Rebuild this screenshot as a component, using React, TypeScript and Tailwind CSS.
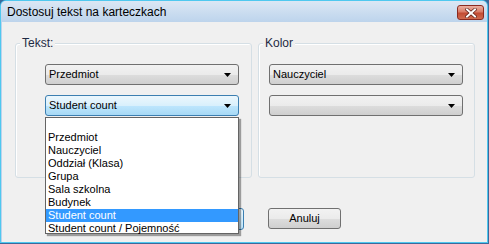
import React from "react";

const font = { fontFamily: '"Liberation Sans", Arial, sans-serif' };

function Arrow() {
  return (
    <svg width="7" height="4" viewBox="0 0 7 4" className="absolute right-[7px] top-1/2 -translate-y-1/2">
      <polygon points="0,0 7,0 3.5,4" fill="#000" />
    </svg>
  );
}

function Combo({ text, focused }: { text: string; focused?: boolean }) {
  return (
    <div
      className={
        "relative h-[21px] w-[194px] rounded-[3px] border flex items-center pl-[3px] text-[11px] text-black " +
        (focused
          ? "border-[#3c7fb1] bg-[linear-gradient(#ecf7fd_0%,#d9f0fc_50%,#bee6fd_51%,#a7d9f5_100%)]"
          : "border-[#707070] bg-[linear-gradient(#f2f2f2_0%,#ebebeb_50%,#dddddd_51%,#cfcfcf_100%)]")
      }
      style={font}
    >
      <span className="leading-none">{text}</span>
      <Arrow />
    </div>
  );
}

function Group({ label, className, children }: { label: string; className: string; children: React.ReactNode }) {
  return (
    <div className={"relative rounded-[3px] border border-[#d5dfe5] shadow-[inset_1px_1px_0_#fff] " + className}>
      <span className="absolute -top-[8px] left-[4px] bg-[#f0f0f0] px-[2px] text-[12px] leading-[14px] text-[#1e2a44]" style={font}>
        {label}
      </span>
      {children}
    </div>
  );
}

export default function App() {
  const items = ["", "Przedmiot", "Nauczyciel", "Oddział (Klasa)", "Grupa", "Sala szkolna", "Budynek", "Student count", "Student count / Pojemność"];
  return (
    <div className="relative w-[489px] h-[244px] bg-[#3a6a9c] overflow-hidden" style={font}>
      <div className="absolute left-0 top-0 w-[488px] h-[243px] bg-[#4fc8ef] rounded-tr-[6px] rounded-tl-[6px]">
        <div className="flex flex-col w-[486px] h-[241px] ml-[1px] mt-[1px] bg-[#bcd3ec] rounded-tr-[5px] rounded-tl-[5px]">
          <div className="h-[21px] flex items-center justify-between bg-[linear-gradient(#dbe7f4,#bdd4ec)] rounded-t-[5px]">
            <span className="pl-[6px] pt-[1px] text-[12px] text-black">Dostosuj tekst na karteczkach</span>
            <div className="mr-[3px] mt-[2px] w-[27px] h-[15px] rounded-[3px] border border-[#8b2a20] bg-[linear-gradient(#eab0a2_0%,#d97c67_45%,#c24b33_55%,#cf6b4f_100%)] flex items-center justify-center">
              <svg width="12" height="10" viewBox="0 0 12 10">
                <path d="M2 1.5 L10 8.5 M10 1.5 L2 8.5" stroke="#5a1a12" strokeWidth="3.4" strokeLinecap="square" />
                <path d="M2 1.5 L10 8.5 M10 1.5 L2 8.5" stroke="#fff" strokeWidth="2" strokeLinecap="square" />
              </svg>
            </div>
          </div>
          <div className="flex-1 bg-[#f0f0f0] ml-[1px] mr-0 relative">
            <div className="flex gap-[6px] pl-[13px] pt-[21px]">
              <Group label="Tekst:" className="w-[237px] h-[135px]">
                <div className="flex flex-col gap-[10px] pl-[29px] pt-[20px]">
                  <Combo text="Przedmiot" />
                  <Combo text="Student count" focused />
                </div>
              </Group>
              <Group label="Kolor" className="w-[217px] h-[135px]">
                <div className="flex flex-col gap-[10px] pl-[10px] pt-[20px]">
                  <Combo text="Nauczyciel" />
                  <Combo text="" />
                </div>
              </Group>
            </div>
            <div className="flex gap-[24px] pl-[167px] pt-[30px]">
              <div className="w-[75px] h-[22px] rounded-[3px] border border-[#3c7fb1] bg-[linear-gradient(#ecf7fd,#bee6fd)]" />
              <div className="w-[73px] h-[21px] rounded-[3px] border border-[#707070] bg-[linear-gradient(#f2f2f2_0%,#ebebeb_50%,#dddddd_51%,#cfcfcf_100%)] flex items-center justify-center text-[11px] text-black">
                Anuluj
              </div>
            </div>
          </div>
        </div>
      </div>
      <div className="absolute left-[45px] top-[117px] w-[194px] h-[117px] bg-white border border-[#646464] shadow-[2px_2px_1px_rgba(0,0,0,0.35)] text-[11px] text-black">
        {items.map((t, i) => (
          <div
            key={i}
            className={"h-[13px] leading-[13px] pl-[2px] " + (t === "Student count" ? "bg-[#3399ff] text-white" : "")}
          >
            {t}
          </div>
        ))}
      </div>
    </div>
  );
}
